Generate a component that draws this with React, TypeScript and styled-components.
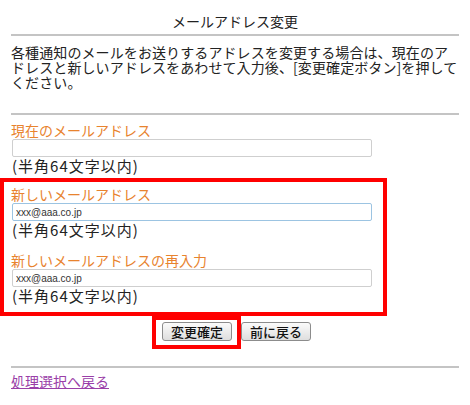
import styled, { createGlobalStyle } from 'styled-components';

const GlobalStyle = createGlobalStyle`
    body {
        margin: 0;
        background: #fff;
        font-family: "Noto Sans CJK JP", "Noto Sans", sans-serif;
        color: #222;
    }
`

const Page = styled.div`
    width: 470px;
    padding: 0 11px;
    box-sizing: border-box;
`

const Title = styled.h1`
    margin: 0;
    padding-top: 11px;
    font-size: 14px;
    font-weight: normal;
    line-height: 20px;
    text-align: center;
    color: #222;
`

const Rule = styled.hr<{ $top: number }>`
    margin: ${p => p.$top}px 0 0;
    border: none;
    height: 2px;
    background: #c4c4c4;
`

const Intro = styled.p`
    margin: 9px 0 0;
    font-size: 14px;
    line-height: 15px;
    letter-spacing: 0.1px;
    white-space: nowrap;
`

const Field = styled.div`
    display: flex;
    flex-direction: column;
`

const Label = styled.label`
    font-size: 14px;
    line-height: 18px;
    color: #e8832e;
`

const Input = styled.input<{ $focused?: boolean }>`
    box-sizing: border-box;
    width: 360px;
    height: 18px;
    margin: 0 0 0 1px;
    padding: 0 3px;
    border: 1px solid ${p => (p.$focused ? '#9cc4e2' : '#cfcfcf')};
    border-radius: 2px;
    background: #fff;
    font-family: "Liberation Sans", Arial, sans-serif;
    font-size: 10px;
    color: #333;
    outline: none;
`

const Note = styled.div`
    padding-left: 1px;
    font-size: 15px;
    line-height: 17px;
    letter-spacing: 1px;
    color: #222;
`

const Highlight = styled.div`
    margin: 4px 0 0 -11px;
    width: 387px;
    box-sizing: border-box;
    border: 4px solid #ff0000;
    padding: 3px 0 8px 7px;
    display: flex;
    flex-direction: column;
    gap: 13px;
`

const ButtonRow = styled.div`
    display: flex;
    justify-content: center;
    align-items: flex-start;
    padding-right: 7px;
`

const ButtonMark = styled.div`
    border: 4px solid #ff0000;
    padding: 2px 5px 4px 6px;
    display: flex;
`

const Button = styled.button`
    height: 19px;
    padding: 0 8px;
    border: 1px solid #8c8c8c;
    border-radius: 3px;
    background: linear-gradient(#fbfbfb, #dedede);
    font-family: "Noto Sans CJK JP", sans-serif;
    font-size: 13px;
    font-weight: 500;
    line-height: 17px;
    color: #111;
    cursor: pointer;
`

const PlainButton = styled(Button)`
    margin-top: 6px;
`

const BackLink = styled.a`
    display: inline-block;
    margin-top: 4px;
    font-size: 14px;
    line-height: 18px;
    color: #9a3ea8;
    text-decoration: underline;
`

export default function App() {
    return (
        <Page>
            <GlobalStyle />
            <Title>メールアドレス変更</Title>
            <Rule $top={3} />
            <Intro>
                各種通知のメールをお送りするアドレスを変更する場合は、現在のア<br />
                ドレスと新しいアドレスをあわせて入力後、[変更確定ボタン]を押して<br />
                ください。
            </Intro>

            <Rule $top={23} />

            <Field style={{ marginTop: 6 }}>
                <Label>現在のメールアドレス</Label>
                <Input />
                <Note>(半角64文字以内)</Note>
            </Field>

            <Highlight>
                <Field>
                    <Label>新しいメールアドレス</Label>
                    <Input $focused defaultValue="xxx@aaa.co.jp" />
                    <Note>(半角64文字以内)</Note>
                </Field>
                <Field>
                    <Label>新しいメールアドレスの再入力</Label>
                    <Input defaultValue="xxx@aaa.co.jp" />
                    <Note>(半角64文字以内)</Note>
                </Field>
            </Highlight>

            <ButtonRow>
                <ButtonMark>
                    <Button>変更確定</Button>
                </ButtonMark>
                <PlainButton>前に戻る</PlainButton>
            </ButtonRow>

            <Rule $top={17} />
            <BackLink href="#">処理選択へ戻る</BackLink>
        </Page>
    )
}
